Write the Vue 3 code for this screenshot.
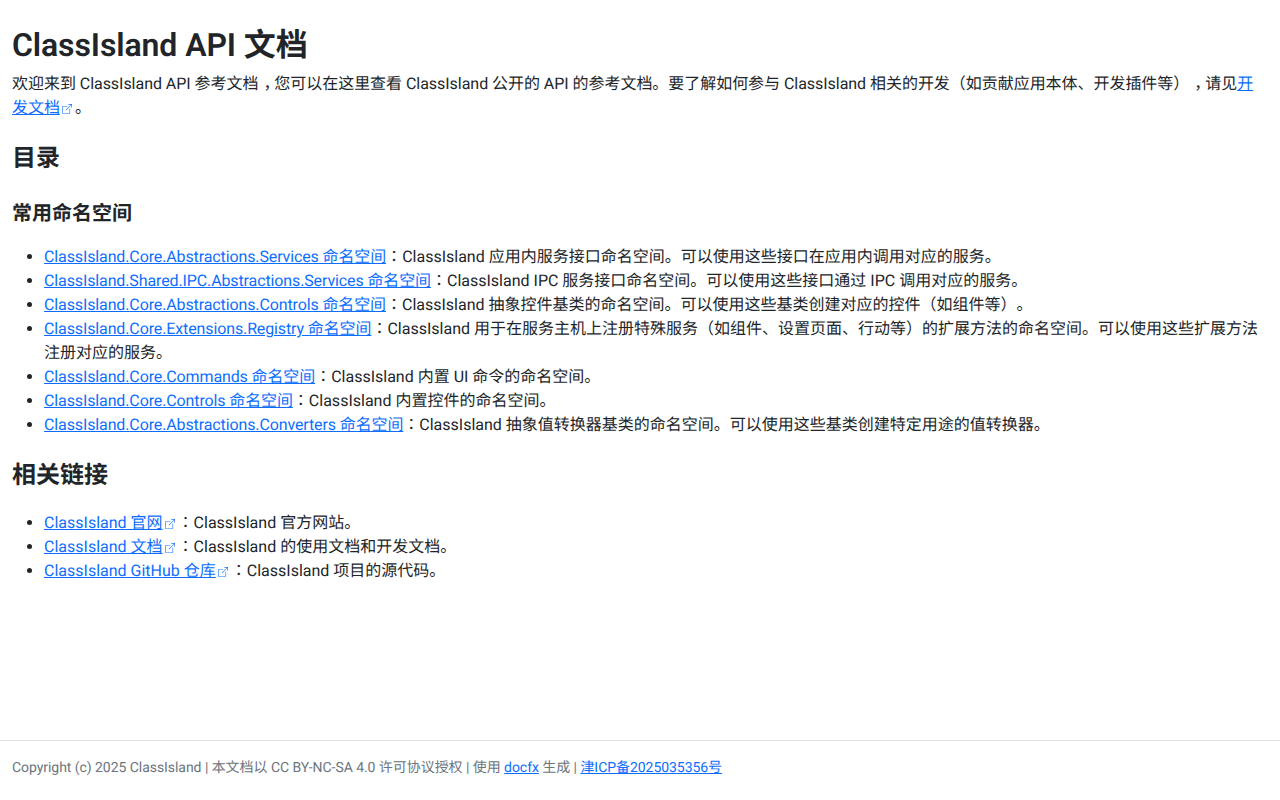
<script setup>
const icon1 = "M8.636 3.5a.5.5 0 0 0-.5-.5H1.5A1.5 1.5 0 0 0 0 4.5v10A1.5 1.5 0 0 0 1.5 16h10a1.5 1.5 0 0 0 1.5-1.5V7.864a.5.5 0 0 0-1 0V14.5a.5.5 0 0 1-.5.5h-10a.5.5 0 0 1-.5-.5v-10a.5.5 0 0 1 .5-.5h6.636a.5.5 0 0 0 .5-.5"
const icon2 = "M16 .5a.5.5 0 0 0-.5-.5h-5a.5.5 0 0 0 0 1h3.793L6.146 9.146a.5.5 0 1 0 .708.708L15 1.707V5.5a.5.5 0 0 0 1 0z"
const namespaces = [
  ["ClassIsland.Core.Abstractions.Services 命名空间", "ClassIsland 应用内服务接口命名空间。可以使用这些接口在应用内调用对应的服务。"],
  ["ClassIsland.Shared.IPC.Abstractions.Services 命名空间", "ClassIsland IPC 服务接口命名空间。可以使用这些接口通过 IPC 调用对应的服务。"],
  ["ClassIsland.Core.Abstractions.Controls 命名空间", "ClassIsland 抽象控件基类的命名空间。可以使用这些基类创建对应的控件（如组件等）。"],
  ["ClassIsland.Core.Extensions.Registry 命名空间", "ClassIsland 用于在服务主机上注册特殊服务（如组件、设置页面、行动等）的扩展方法的命名空间。可以使用这些扩展方法注册对应的服务。"],
  ["ClassIsland.Core.Commands 命名空间", "ClassIsland 内置 UI 命令的命名空间。"],
  ["ClassIsland.Core.Controls 命名空间", "ClassIsland 内置控件的命名空间。"],
  ["ClassIsland.Core.Abstractions.Converters 命名空间", "ClassIsland 抽象值转换器基类的命名空间。可以使用这些基类创建特定用途的值转换器。"],
]
const related = [
  ["ClassIsland 官网", "ClassIsland 官方网站。"],
  ["ClassIsland 文档", "ClassIsland 的使用文档和开发文档。"],
  ["ClassIsland GitHub 仓库", "ClassIsland 项目的源代码。"],
]
</script>

<template>
  <div class="page">
    <main class="content">
      <h1>ClassIsland API 文档</h1>
      <p>欢迎来到 ClassIsland API 参考文档<span class="comma">，</span>您可以在这里查看 ClassIsland 公开的 API 的参考文档。要了解如何参与 ClassIsland 相关的开发（如贡献应用本体、开发插件等）<span class="comma">，</span>请见<a href="#">开发文档</a><svg class="ext" viewBox="0 0 16 16" fill="currentColor"><path :d="icon1" /><path :d="icon2" /></svg>。</p>
      <h2>目录</h2>
      <h3>常用命名空间</h3>
      <ul>
        <li v-for="n in namespaces" :key="n[0]"><a href="#" class="ns">{{ n[0] }}</a><span class="punct">：</span>{{ n[1] }}</li>
      </ul>
      <h2>相关链接</h2>
      <ul class="related">
        <li v-for="r in related" :key="r[0]"><a href="#">{{ r[0] }}</a><svg class="ext" viewBox="0 0 16 16" fill="currentColor"><path :d="icon1" /><path :d="icon2" /></svg><span class="punct">：</span>{{ r[1] }}</li>
      </ul>
    </main>
    <footer class="footer">Copyright (c) 2025 ClassIsland | 本文档以 CC BY-NC-SA 4.0 许可协议授权 | 使用 <a href="#">docfx</a> 生成 | <a href="#">津ICP备2025035356号</a></footer>
  </div>
</template>

<style scoped>
.page {
  height: 800px;
  display: flex;
  flex-direction: column;
  font-family: Roboto, "Noto Sans CJK SC", sans-serif;
  font-size: 16px;
  line-height: 24px;
  color: #212529;
  text-rendering: geometricPrecision;
  text-spacing-trim: space-all;
}
.punct {
  font-family: "Noto Sans CJK TC", sans-serif;
  line-height: 1;
}
.comma {
  padding-left: 5px;
  margin-right: -5px;
  line-height: 1;
}
.ns {
  letter-spacing: -0.12px;
}
.content {
  flex: 1;
  padding: 26px 12px 0;
  min-height: 0;
}
h1, h2, h3 {
  margin: 0;
  font-weight: 600;
}
h1 {
  font-size: 32px;
  line-height: 38.4px;
  margin-bottom: 8px;
  letter-spacing: -0.1px;
}
h2 {
  font-size: 24px;
  line-height: 28.8px;
  margin: 24px 0 16px;
}
h3 {
  font-size: 20px;
  line-height: 24px;
  margin: 28px 0 20px;
}
p {
  margin: 0;
  letter-spacing: -0.04px;
}
ul {
  margin: 0 0 16px;
  padding-left: 32px;
}
.related {
  margin-top: 21px;
}
a {
  color: #0d6efd;
  text-decoration: underline;
}
.ext {
  width: 10px;
  height: 10px;
  margin: 0 3px 0 2px;
  color: #0d6efd;
  opacity: 0.95;
  vertical-align: -1px;
}
.footer {
  height: 60px;
  box-sizing: border-box;
  border-top: 1px solid #dee2e6;
  padding: 0 12px;
  display: block;
  line-height: 54px;
  font-size: 14px;
  color: #6c757d;
  letter-spacing: -0.05px;
}
</style>
